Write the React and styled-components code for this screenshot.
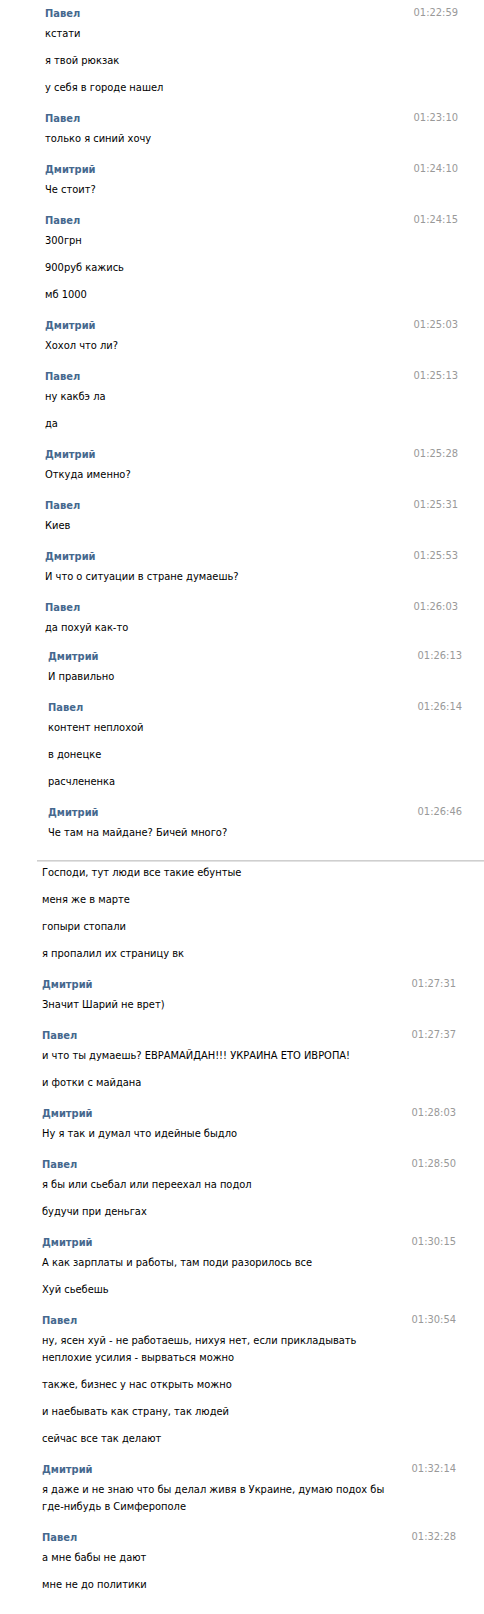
import React from "react";
import styled, { createGlobalStyle } from "styled-components";

const GlobalStyle = createGlobalStyle`
  html, body {
    margin: 0;
    padding: 0;
    background: #ffffff;
  }
  body {
    font-family: "DejaVu Sans Condensed", "Liberation Sans", sans-serif;
    font-size: 11px;
    color: #000;
  }
`;

const sections = [
  {
    indent: 45,
    right: 26,
    top: 0,
    bottom: 9,
    groups: [
      { name: "Павел", time: "01:22:59", msgs: ["кстати", "я твой рюкзак", "у себя в городе нашел"] },
      { name: "Павел", time: "01:23:10", msgs: ["только я синий хочу"] },
      { name: "Дмитрий", time: "01:24:10", msgs: ["Че стоит?"] },
      { name: "Павел", time: "01:24:15", msgs: ["300грн", "900руб кажись", "мб 1000"] },
      { name: "Дмитрий", time: "01:25:03", msgs: ["Хохол что ли?"] },
      { name: "Павел", time: "01:25:13", msgs: ["ну какбэ ла", "да"] },
      { name: "Дмитрий", time: "01:25:28", msgs: ["Откуда именно?"] },
      { name: "Павел", time: "01:25:31", msgs: ["Киев"] },
      { name: "Дмитрий", time: "01:25:53", msgs: ["И что о ситуации в стране думаешь?"] },
      { name: "Павел", time: "01:26:03", msgs: ["да похуй как-то"] },
    ],
  },
  {
    indent: 48,
    right: 22,
    top: 3,
    bottom: 19,
    divider: true,
    groups: [
      { name: "Дмитрий", time: "01:26:13", msgs: ["И правильно"] },
      { name: "Павел", time: "01:26:14", msgs: ["контент неплохой", "в донецке", "расчлененка"] },
      { name: "Дмитрий", time: "01:26:46", msgs: ["Че там на майдане? Бичей много?"] },
    ],
  },
  {
    indent: 42,
    right: 28,
    top: 2,
    bottom: 9,
    groups: [
      {
        msgs: [
          "Господи, тут люди все такие ебунтые",
          "меня же в марте",
          "гопыри стопали",
          "я пропалил их страницу вк",
        ],
      },
      { name: "Дмитрий", time: "01:27:31", msgs: ["Значит Шарий не врет)"] },
      {
        name: "Павел",
        time: "01:27:37",
        msgs: ["и что ты думаешь? ЕВРАМАЙДАН!!! УКРАИНА ЕТО ИВРОПА!", "и фотки с майдана"],
      },
      { name: "Дмитрий", time: "01:28:03", msgs: ["Ну я так и думал что идейные быдло"] },
      { name: "Павел", time: "01:28:50", msgs: ["я бы или сьебал или переехал на подол", "будучи при деньгах"] },
      {
        name: "Дмитрий",
        time: "01:30:15",
        msgs: ["А как зарплаты и работы, там поди разорилось все", "Хуй сьебешь"],
      },
      {
        name: "Павел",
        time: "01:30:54",
        msgs: [
          "ну, ясен хуй - не работаешь, нихуя нет, если прикладывать\nнеплохие усилия - вырваться можно",
          "также, бизнес у нас открыть можно",
          "и наебывать как страну, так людей",
          "сейчас все так делают",
        ],
      },
      {
        name: "Дмитрий",
        time: "01:32:14",
        msgs: ["я даже и не знаю что бы делал живя в Украине, думаю подох бы\nгде-нибудь в Симферополе"],
      },
      { name: "Павел", time: "01:32:28", msgs: ["а мне бабы не дают", "мне не до политики"] },
    ],
  },
];

export default function App() {
  return (
    <Page>
      <GlobalStyle />
      {sections.map((s, i) => (
        <React.Fragment key={i}>
          <Section $indent={s.indent} $right={s.right} $top={s.top} $bottom={s.bottom}>
            {s.groups.map((g, k) => (
              <Group key={k}>
                {g.name && (
                  <Header>
                    <Name>{g.name}</Name>
                    <Time>{g.time}</Time>
                  </Header>
                )}
                <Messages>
                  {g.msgs.map((m, j) => (
                    <Text key={j}>{m}</Text>
                  ))}
                </Messages>
              </Group>
            ))}
          </Section>
          {s.divider && <Divider />}
        </React.Fragment>
      ))}
    </Page>
  );
}

const Page = styled.div`
  width: 484px;
  min-height: 1614px;
  background: #fff;
`;

const Section = styled.div`
  display: flex;
  flex-direction: column;
  gap: 14px;
  padding: ${(p) => p.$top}px ${(p) => p.$right}px ${(p) => p.$bottom}px ${(p) => p.$indent}px;
  &:first-child {
    padding-top: 5px;
  }
`;

const Group = styled.div`
  display: flex;
  flex-direction: column;
  gap: 3px;
`;

const Header = styled.div`
  display: flex;
  justify-content: space-between;
  align-items: flex-start;
  height: 17px;
`;

const Name = styled.span`
  font-weight: bold;
  color: #45688e;
  line-height: 17px;
`;

const Time = styled.span`
  color: #999;
  line-height: 15px;
`;

const Messages = styled.div`
  display: flex;
  flex-direction: column;
  gap: 10px;
`;

const Text = styled.div`
  line-height: 17px;
  white-space: pre;
`;

const Divider = styled.div`
  margin-left: 37px;
  height: 2px;
  border-top: 1px solid #cfcfcf;
  background: #e2e2e2;
  box-sizing: border-box;
`;
